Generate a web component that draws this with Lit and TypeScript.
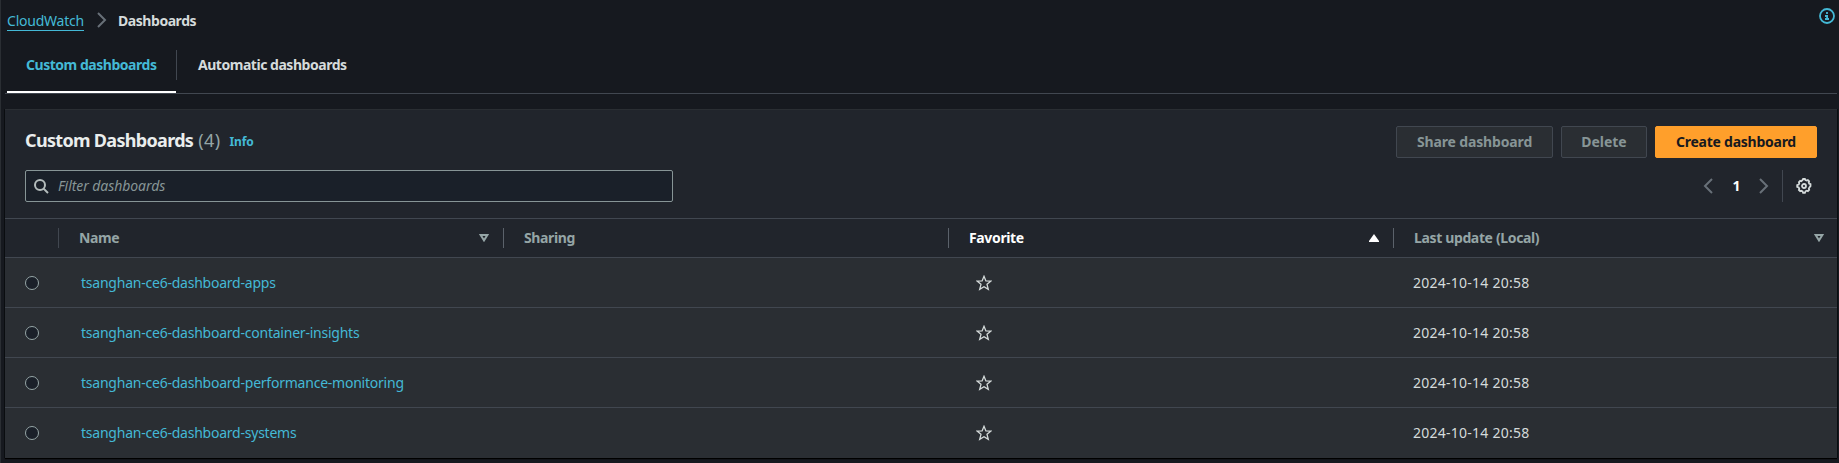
import { LitElement, html, css, svg } from "lit";
import { customElement } from "lit/decorators.js";

const dashboards = [
  { name: "tsanghan-ce6-dashboard-apps", updated: "2024-10-14 20:58" },
  { name: "tsanghan-ce6-dashboard-container-insights", updated: "2024-10-14 20:58" },
  { name: "tsanghan-ce6-dashboard-performance-monitoring", updated: "2024-10-14 20:58" },
  { name: "tsanghan-ce6-dashboard-systems", updated: "2024-10-14 20:58" },
];

const icon = (cls: string, body: unknown, size = 16) =>
  html`<svg class="icon ${cls}" width=${size} height=${size} viewBox="0 0 16 16">${body}</svg>`;

const angleRight = svg`<path d="M4 1l7 7-7 7" />`;
const angleLeft = svg`<path d="M12 1L5 8l7 7" />`;
const info = svg`<circle cx="8" cy="8" r="7" /><path d="M8 4v2M6 8h2.1v3M6 11h4" />`;
const search = svg`<circle cx="7" cy="7" r="5" /><path d="M10.6 10.6L15 15" />`;
const star = svg`<path d="M8 1.3l1.9 4.6 4.9.3-3.8 3.1 1.3 5.1L8 11.7l-4.3 2.7L5 9.3 1.2 6.2l4.9-.3z" />`;
const gear = svg`<path d="M6.6 2 L7.1 1h1.8L9.4 2 L10.7 2.5l1.1-.4 1.3 1.2-.4 1.1.6 1.3 1.2.5v2L13.4 9.4l-.6 1.3.4 1.1-1.3 1.3-1.1-.4-1.3.6L8.9 14.9H7.1L6.6 13.4l-1.3-.6-1.1.4-1.3-1.3.4-1.1-.6-1.3L1.2 8.9V7.1L2.7 6.6l.6-1.3-.4-1.1 1.3-1.3 1.1.4z" /><circle cx="8" cy="8" r="2" />`;

const caretDown = html`<svg class="caret" width="10" height="8" viewBox="0 0 10 8"><path class="hollow" d="M1.6 1h6.8L5 6.4z" /></svg>`;
const caretUp = html`<svg class="caret" width="10" height="8" viewBox="0 0 10 8"><path class="solid" d="M5 0l5 7v1H0V7z" /></svg>`;

@customElement("app-root")
export class AppRoot extends LitElement {
  static styles = css`
    :host {
      display: block;
      box-sizing: border-box;
      height: 463px;
      overflow: hidden;
      background: #16191f;
      border-left: 1px solid #2a2e33;
      padding: 0 2px 0 4px;
      font: 400 14px/20px "Noto Sans", "Open Sans", sans-serif;
      color: #d5dbdb;
      white-space: nowrap;
    }
    * { box-sizing: border-box; }
    .icon { display: block; flex: none; fill: none; stroke: currentColor; stroke-width: 2; }
    .topbar { display: flex; align-items: flex-start; justify-content: space-between; height: 43px; padding: 8px 2px 0; }
    .crumbs { display: flex; padding-top: 3px; }
    .crumb-link { height: 20px; color: #44b9d6; letter-spacing: -0.22px; border-bottom: 1px solid #44b9d6; }
    .crumb-sep { color: #687078; margin: 1px 9px 0 10px; }
    .crumb-here { font-weight: 700; letter-spacing: -0.45px; margin-left: -1px; }
    .info-icon { color: #44b9d6; stroke-width: 1.8; }
    .tabs { display: flex; height: 51px; border-bottom: 1px solid #414750; padding-left: 2px; }
    .tab { padding: 12px 0 0 19px; font-weight: 700; letter-spacing: -0.47px; height: 50px; }
    .tab.active { width: 169px; color: #44b9d6; border-bottom: 2px solid #fff; }
    .tab-divider { width: 1px; height: 30px; margin-top: 7px; background: #414750; }
    .tab.other { padding-left: 21px; }
    .panel { margin-top: 15px; background: #21252c; border-top: 1px solid #2a2e33; box-shadow: 0 1px 1px #000, -1px 0 0 #0d1014, 1px 0 0 #0d1014; }
    .title-row { display: flex; justify-content: space-between; height: 60px; padding: 16px 20px 0; }
    h2 { display: flex; margin: 0; padding-top: 3px; font-size: 18px; line-height: 22px; font-weight: 700; color: #eaeded; letter-spacing: -0.68px; }
    .count { font-weight: 400; color: #95a5a6; letter-spacing: 0.4px; margin-left: 5px; }
    .info { font-size: 12px; line-height: 26px; color: #44b9d6; letter-spacing: -0.15px; margin-left: 9px; }
    .actions { display: flex; gap: 8px; }
    .btn { height: 32px; border: 1px solid #414750; border-radius: 2px; background: #2a2e33; color: #879596; font-weight: 700; line-height: 20px; padding: 5px 0; text-align: center; }
    .share { width: 157px; letter-spacing: -0.14px; }
    .delete { width: 86px; letter-spacing: -0.05px; }
    .create { width: 162px; background: #ff9f2b; border-color: #ff9f2b; color: #16191f; letter-spacing: -0.25px; }
    .filter-row { display: flex; justify-content: space-between; height: 48px; padding: 0 20px; }
    .filter { display: flex; align-items: center; width: 648px; height: 32px; border: 1px solid #879596; border-radius: 2px; background: #1a2029; padding-left: 7px; color: #879596; font-style: italic; letter-spacing: -0.07px; }
    .filter .icon { color: #b4bcbc; margin-right: 9px; }
    .tools { display: flex; align-items: center; height: 32px; }
    .pager { color: #687078; }
    .page { width: 30px; text-align: center; color: #fff; font-weight: 700; margin-left: 5.5px; }
    .next { margin-left: 4.5px; }
    .tool-divider { width: 1px; height: 32px; background: #414750; margin: 0 13px 0 10px; }
    .gear { color: #d5dbdb; margin-right: 5px; stroke-width: 1.8; }
    .grid { display: grid; grid-template-columns: 54px 445px 445px 445px 1fr; }
    .head { height: 40px; border-top: 1px solid #414750; border-bottom: 1px solid #414750; align-items: center; font-weight: 700; color: #95a5a6; }
    .th { display: flex; align-items: center; justify-content: space-between; height: 20px; padding: 0 14px 0 20px; border-right: 1px solid #5b626b; letter-spacing: -0.36px; }
    .th.first { border-right-color: #414750; }
    .th.last { border: 0; padding-right: 13px; }
    .th.sorted { color: #fff; }
    .caret { display: block; }
    .hollow { fill: none; stroke: #95a5a6; stroke-width: 2; }
    .solid { fill: #fff; }
    .row { height: 50px; background: #2a2e33; border-bottom: 1px solid #414750; align-items: center; }
    .row:last-child { border-bottom-color: #2a2e33; }
    .radio { width: 14px; height: 14px; margin-left: 20px; border: 1px solid #95a5a6; border-radius: 50%; background: #1a2029; }
    .link { color: #44b9d6; padding-left: 22px; letter-spacing: -0.23px; }
    .star { margin-left: 27px; stroke-width: 1.3; }
    .date { padding-left: 19px; letter-spacing: 0.25px; }
  `;

  render() {
    return html`
      <div class="topbar">
        <div class="crumbs">
          <span class="crumb-link">CloudWatch</span>
          ${icon("crumb-sep", angleRight)}
          <span class="crumb-here">Dashboards</span>
        </div>
        ${icon("info-icon", info)}
      </div>
      <div class="tabs">
        <div class="tab active">Custom dashboards</div>
        <div class="tab-divider"></div>
        <div class="tab other">Automatic dashboards</div>
      </div>
      <div class="panel">
        <div class="title-row">
          <h2>Custom Dashboards <span class="count">(4)</span><span class="info">Info</span></h2>
          <div class="actions">
            <div class="btn share">Share dashboard</div>
            <div class="btn delete">Delete</div>
            <div class="btn create">Create dashboard</div>
          </div>
        </div>
        <div class="filter-row">
          <div class="filter">${icon("", search)}<span>Filter dashboards</span></div>
          <div class="tools">
            ${icon("pager", angleLeft)}
            <span class="page">1</span>
            ${icon("pager next", angleRight)}
            <span class="tool-divider"></span>
            ${icon("gear", gear)}
          </div>
        </div>
        <div class="grid head">
          <div class="th first"></div>
          <div class="th">Name ${caretDown}</div>
          <div class="th">Sharing</div>
          <div class="th sorted">Favorite ${caretUp}</div>
          <div class="th last">Last update (Local) ${caretDown}</div>
        </div>
        ${dashboards.map(
          (d) => html`<div class="grid row">
            <span class="radio"></span>
            <span class="link">${d.name}</span>
            <span></span>
            ${icon("star", star)}
            <span class="date">${d.updated}</span>
          </div>`
        )}
      </div>
    `;
  }
}
